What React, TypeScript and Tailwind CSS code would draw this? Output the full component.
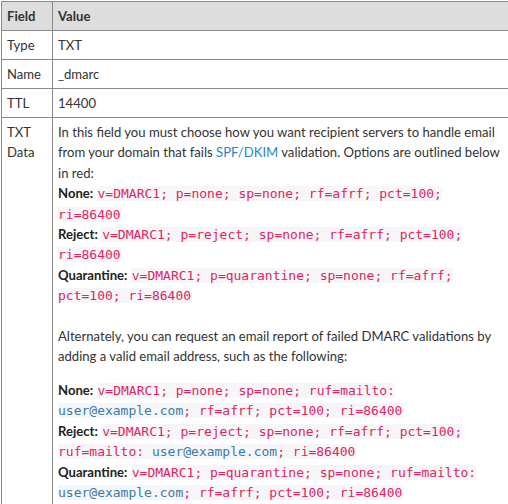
import React from "react";

const Code = ({ children }: { children: React.ReactNode }) => (
  <code className="font-['DejaVu_Sans_Mono',monospace] text-[13px] leading-none text-[#e0245e] bg-[#f6f6f8] px-[1px]">
    {children}
  </code>
);

const Mail = () => <span className="text-[#3b7aa6]">user@example.com</span>;

export default function App() {
  return (
    <div className="w-[508px] h-[504px] overflow-hidden bg-white pt-[1px] pl-[1px] font-['Lato','Noto_Sans',sans-serif] text-[13.1px] leading-[20px] text-[#333]">
      <table className="border-collapse w-[513px] table-fixed">
        <colgroup>
          <col className="w-[51px]" />
          <col className="w-[462px]" />
        </colgroup>
        <thead>
          <tr className="bg-[#dddddd]">
            <th className="border border-[#8a8a8a] px-[5px] py-[4px] text-left font-bold align-top">Field</th>
            <th className="border border-[#8a8a8a] px-[5px] py-[4px] text-left font-bold align-top">Value</th>
          </tr>
        </thead>
        <tbody>
          <tr>
            <td className="border border-[#8a8a8a] px-[5px] py-[4px] align-top">Type</td>
            <td className="border border-[#8a8a8a] px-[5px] py-[4px] align-top">TXT</td>
          </tr>
          <tr>
            <td className="border border-[#8a8a8a] px-[5px] py-[4px] align-top">Name</td>
            <td className="border border-[#8a8a8a] px-[5px] py-[4px] align-top">_dmarc</td>
          </tr>
          <tr>
            <td className="border border-[#8a8a8a] px-[5px] py-[4px] align-top">TTL</td>
            <td className="border border-[#8a8a8a] px-[5px] py-[4px] align-top">14400</td>
          </tr>
          <tr>
            <td className="border border-[#8a8a8a] px-[5px] py-[4px] align-top">
              TXT
              <br />
              Data
            </td>
            <td className="border border-[#8a8a8a] px-[5px] py-[4px] align-top leading-[20.4px]">
              <div>
                In this field you must choose how you want recipient servers to handle email from your domain that
                fails <span className="text-[#2a86c0]">SPF/DKIM</span> validation. Options are outlined below in red:
                <br />
                <b className="font-bold text-[#222]">None:</b> <Code>v=DMARC1; p=none; sp=none; rf=afrf; pct=100; ri=86400</Code>
                <br />
                <b className="font-bold text-[#222]">Reject:</b> <Code>v=DMARC1; p=reject; sp=none; rf=afrf; pct=100; ri=86400</Code>
                <br />
                <b className="font-bold text-[#222]">Quarantine:</b>{" "}
                <Code>v=DMARC1; p=quarantine; sp=none; rf=afrf; pct=100; ri=86400</Code>
                <br />
                <br />
              </div>
              <div className="mb-[13px]">
                Alternately, you can request an email report of failed DMARC validations by adding a valid email
                address, such as the following:
              </div>
              <div>
                <b className="font-bold text-[#222]">None:</b>{" "}
                <Code>
                  v=DMARC1; p=none; sp=none; ruf=mailto: <Mail />; rf=afrf; pct=100; ri=86400
                </Code>
                <br />
                <b className="font-bold text-[#222]">Reject:</b>{" "}
                <Code>
                  v=DMARC1; p=reject; sp=none; rf=afrf; pct=100; ruf=mailto: <Mail />; ri=86400
                </Code>
                <br />
                <b className="font-bold text-[#222]">Quarantine:</b>{" "}
                <Code>
                  v=DMARC1; p=quarantine; sp=none; ruf=mailto: <Mail />; rf=afrf; pct=100; ri=86400
                </Code>
              </div>
            </td>
          </tr>
        </tbody>
      </table>
    </div>
  );
}
